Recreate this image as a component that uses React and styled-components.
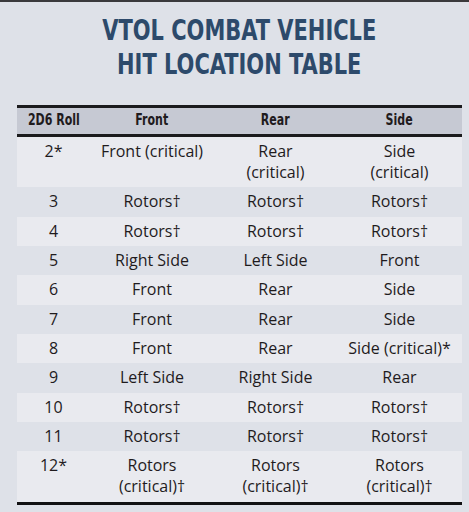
import styled, { createGlobalStyle } from "styled-components"

const GlobalStyle = createGlobalStyle`
  html, body {
    margin: 0;
    padding: 0;
    background: #dee1e8;
  }
  body {
    font-family: "Open Sans", "Liberation Sans", sans-serif;
  }
`

const rows = [
  { roll: "2*", front: ["Front (critical)"], rear: ["Rear", "(critical)"], side: ["Side", "(critical)"] },
  { roll: "3", front: ["Rotors†"], rear: ["Rotors†"], side: ["Rotors†"] },
  { roll: "4", front: ["Rotors†"], rear: ["Rotors†"], side: ["Rotors†"] },
  { roll: "5", front: ["Right Side"], rear: ["Left Side"], side: ["Front"] },
  { roll: "6", front: ["Front"], rear: ["Rear"], side: ["Side"] },
  { roll: "7", front: ["Front"], rear: ["Rear"], side: ["Side"] },
  { roll: "8", front: ["Front"], rear: ["Rear"], side: ["Side (critical)*"] },
  { roll: "9", front: ["Left Side"], rear: ["Right Side"], side: ["Rear"] },
  { roll: "10", front: ["Rotors†"], rear: ["Rotors†"], side: ["Rotors†"] },
  { roll: "11", front: ["Rotors†"], rear: ["Rotors†"], side: ["Rotors†"] },
  { roll: "12*", front: ["Rotors", "(critical)†"], rear: ["Rotors", "(critical)†"], side: ["Rotors", "(critical)†"] },
]

const Lines = ({ lines }) =>
  lines.map((line, i) => (
    <span key={i}>
      {i > 0 && <br />}
      {line}
    </span>
  ))

const App = () => {
  return (
    <Page>
      <GlobalStyle />
      <Title>
        <TitleText>
          VTOL COMBAT VEHICLE
          <br />
          HIT LOCATION TABLE
        </TitleText>
      </Title>
      <Table>
        <colgroup>
          <col style={{ width: 73 }} />
          <col style={{ width: 124 }} />
          <col style={{ width: 123 }} />
          <col style={{ width: 125 }} />
        </colgroup>
        <thead>
          <tr>
            <HeadCell><HeadLabel>2D6 Roll</HeadLabel></HeadCell>
            <HeadCell><HeadLabel>Front</HeadLabel></HeadCell>
            <HeadCell><HeadLabel>Rear</HeadLabel></HeadCell>
            <HeadCell><HeadLabel>Side</HeadLabel></HeadCell>
          </tr>
        </thead>
        <tbody>
          {rows.map((row, i) => (
            <Row key={row.roll} $light={i % 2 === 0}>
              <Cell>{row.roll}</Cell>
              <Cell><Lines lines={row.front} /></Cell>
              <Cell><Lines lines={row.rear} /></Cell>
              <Cell><Lines lines={row.side} /></Cell>
            </Row>
          ))}
        </tbody>
      </Table>
    </Page>
  )
}

const Page = styled.div`
  border-top: 2px solid #3a3a3c;
  min-height: calc(100vh - 2px);
  padding: 12px 7px 0 17px;
  box-sizing: border-box;
`

const Title = styled.h1`
  margin: 0 0 23px;
  font-family: "Liberation Sans Narrow", "DejaVu Sans Condensed", sans-serif;
  font-weight: 700;
  font-size: 27.6px;
  line-height: 34px;
  color: #2d4a6b;
  text-align: center;
`

const TitleText = styled.span`
  display: inline-block;
  transform: scaleX(0.845);
`

const Table = styled.table`
  width: 445px;
  border-collapse: collapse;
  table-layout: fixed;
  color: #1f1b1d;
  thead tr {
    background: #c6c9d3;
    border-top: 3px solid #1b1b1d;
    border-bottom: 3px solid #1b1b1d;
  }
  tbody tr:last-child {
    border-bottom: 3px solid #111113;
  }
`

const HeadCell = styled.th`
  padding: 4px 4px 5px;
  font-family: "Liberation Sans Narrow", "DejaVu Sans Condensed", sans-serif;
  font-weight: 700;
  font-size: 15.5px;
  line-height: 17px;
  text-align: center;
  color: #1f1b1d;
  white-space: nowrap;
`

const HeadLabel = styled.span`
  display: inline-block;
  transform: scaleX(0.79);
`

const Row = styled.tr`
  background: ${(p) => (p.$light ? "#e9eaef" : "#dee1e8")};
`

const Cell = styled.td`
  padding: 4px 4px 4.33px;
  font-size: 16px;
  line-height: 21px;
  text-align: center;
  vertical-align: top;
`

export default App
